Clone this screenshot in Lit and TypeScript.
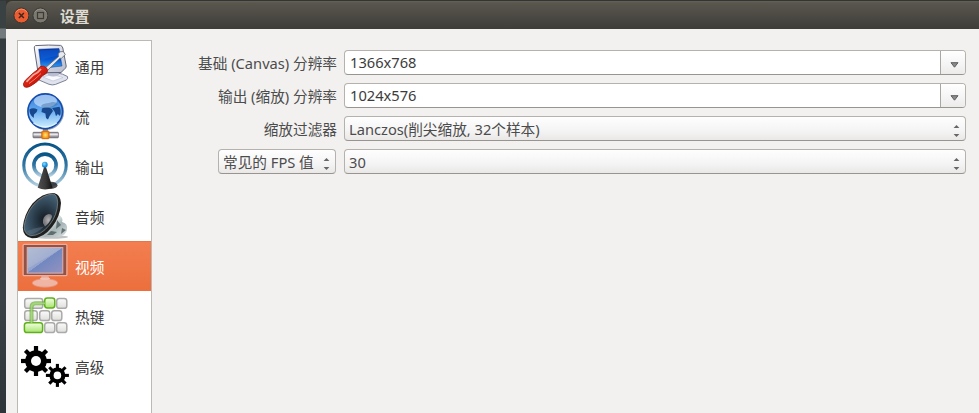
import { LitElement, html, svg, css } from "lit";
import { customElement } from "lit/decorators.js";

const gear = (cx: number, cy: number, outer: number, body: number, hole: number, tooth: number) => svg`
  <g transform="translate(${cx} ${cy})">
    ${[0, 45, 90, 135].map(
      (a) => svg`<rect x=${-tooth / 2} y=${-outer} width=${tooth} height=${outer * 2} transform="rotate(${a})"></rect>`
    )}
    <circle r=${body}></circle>
    <circle r=${hole} fill="#fff"></circle>
  </g>`;

const key = (x: number, y: number, w: number, green = false) => svg`
  <rect x=${x + 0.7} y=${y + 0.7} width=${w - 1.4} height="9.8" rx="2.6"
    fill=${green ? "url(#keyGreen)" : "url(#keyGrey)"} stroke=${green ? "#60b01c" : "#aaaaa8"} stroke-width="1.5"></rect>`;

const icons = {
  general: svg`
    <defs>
      <linearGradient id="scr" x1="0" y1="0" x2="0" y2="1"><stop offset="0" stop-color="#0334a8"/><stop offset=".55" stop-color="#0656d0"/><stop offset="1" stop-color="#35a2f4"/></linearGradient>
      <linearGradient id="red" x1="0" y1="0" x2="1" y2="1"><stop offset="0" stop-color="#f25a40"/><stop offset=".5" stop-color="#d81f10"/><stop offset="1" stop-color="#8c0c06"/></linearGradient>
      <linearGradient id="shell" x1="0" y1="0" x2="1" y2="1"><stop offset="0" stop-color="#fff"/><stop offset="1" stop-color="#b4b9cb"/></linearGradient>
    </defs>
    <path d="M18 34 25 31 Q37 29 46.5 34.5 Q47.5 37 45 38.2 L34.5 42.4 Q31.5 43.5 28 42.3 L18 38Z" fill="#dfe3ee" stroke="#70758a" stroke-width=".9"/>
    <path d="M22 35 31 32.5 42 35.5 32 39Z" fill="#f9faff" stroke="#aeb4c8" stroke-width=".5"/>
    <path d="M27 28 36 28 38 33 Q32 36 27 33Z" fill="#b9bfd0"/>
    <path d="M14.5 3.6 Q28 2.6 39.5 3.4 Q41.4 4 41.8 6 L45.2 24 Q45.4 26 43.6 27 L40 30.5 19 30.7 Q17 30.5 16.7 28.5 L13.3 6 Q13 4.2 14.5 3.6Z" fill="url(#shell)" stroke="#62677c" stroke-width="1"/>
    <path d="M17.7 7.2 38 6.5 41 24 20.3 26.5Z" fill="url(#scr)" stroke="#183c88" stroke-width=".5"/>
    <path d="M18.6 8.5 38 7.2 39.5 14 Q30 13.8 20 19Z" fill="#1767dc" opacity=".4"/>
    <path d="M23.5 26.5 37.5 14.5 Q36.3 11.8 39 9.8 L42.3 9.5 44.3 12.6 40.5 16.2 38.5 16.4 26 29Z" fill="#e6e9ee" stroke="#61656e" stroke-width=".8"/>
    <path d="M19 24.7 Q22.5 23 25.5 25.9 Q27.8 28.5 25.4 31.3 L21.2 34 Q17 40 10 43.8 Q5.5 46.4 3.1 44.6 Q1.2 42 4.4 38.2 L12.5 30.7 Q16.4 28.6 19 24.7Z" fill="url(#red)" stroke="#9c130b" stroke-width=".8"/>
    <path d="M5.5 39.8 12.3 33 Q17.5 30.5 20 27" stroke="#ffc8bd" stroke-width="1.7" fill="none" opacity=".8"/>
    <path d="M8 41.5 14 37 20 31.5" stroke="#ffab98" stroke-width="1" fill="none" opacity=".65"/>`,
  stream: svg`
    <defs>
      <linearGradient id="globe" x1="0" y1="0" x2="0" y2="1"><stop offset="0" stop-color="#3078d2"/><stop offset=".45" stop-color="#5fa6ee"/><stop offset="1" stop-color="#d4f2ff"/></linearGradient>
      <linearGradient id="pipe" x1="0" y1="0" x2="0" y2="1"><stop offset="0" stop-color="#77777c"/><stop offset=".35" stop-color="#f4f4f7"/><stop offset="1" stop-color="#62626a"/></linearGradient>
      <radialGradient id="hub"><stop offset="0" stop-color="#ffe879"/><stop offset="1" stop-color="#f28a0c"/></radialGradient>
    </defs>
    <path d="M22 35h5v5h-5z" fill="#96969d"/>
    <rect x="12" y="40.3" width="25.4" height="5.5" rx=".7" fill="url(#pipe)" stroke="#646268" stroke-width=".7"/>
    <rect x="20.8" y="39.2" width="7.2" height="7.5" rx=".7" fill="url(#hub)" stroke="#d46708"/>
    <circle cx="24.9" cy="19.9" r="18.2" fill="#153a70" opacity=".45"/>
    <circle cx="24.2" cy="19.2" r="17.3" fill="url(#globe)" stroke="#164cad" stroke-width="1.6"/>
    <path d="M8.4 17.5 Q12 14.8 16.5 17.5 L15.7 20 13 22.4 12.7 26 Q8.2 22.5 8.4 17.5ZM21 16.5 Q25 14.5 30.5 16.5 L32 19 28.6 24 27 27.5 25 26 24.4 21.5 20.5 20ZM31 16 38.5 14.8 Q40.7 19.3 39 24 L36.8 22 35 24.2 33.8 20Z" fill="#17488e"/>
    <ellipse cx="24.5" cy="9" rx="11.5" ry="6.3" fill="#dcedff" opacity=".6"/>
    <path d="M20 14.5 Q28 18.5 37 12.5 Q34 8.5 28 11 Q20 11.5 20 14.5Z" fill="#456f9f" opacity=".45"/>
    <path d="M12.5 31 Q24 39 35.7 31" fill="none" stroke="#eafaff" stroke-width="1.4" opacity=".8"/>`,
  output: svg`
    <defs>
      <linearGradient id="wave" x1="0" y1="0" x2="0" y2="1"><stop offset="0" stop-color="#075486"/><stop offset=".5" stop-color="#2f75a2"/><stop offset="1" stop-color="#b7d3e4"/></linearGradient>
      <linearGradient id="mast"><stop offset="0" stop-color="#505050"/><stop offset=".5" stop-color="#3a3a3a"/><stop offset="1" stop-color="#111"/></linearGradient>
      <radialGradient id="ball" cx=".4" cy=".35"><stop offset="0" stop-color="#8fdcff"/><stop offset="1" stop-color="#118bdc"/></radialGradient>
    </defs>
    <circle cx="24" cy="23.2" r="21.2" fill="none" stroke="url(#wave)" stroke-width="3.1"/>
    <circle cx="24" cy="23.2" r="11.1" fill="none" stroke="url(#wave)" stroke-width="3.6"/>
    <ellipse cx="30" cy="43.3" rx="6.5" ry="3.6" fill="#111" opacity=".75"/>
    <path d="M24 22 31.6 45.8 Q24 49.2 16.7 45.8Z" fill="url(#mast)"/>
    <circle cx="23.8" cy="22.7" r="2.9" fill="url(#ball)"/>`,
  audio: svg`
    <defs>
      <radialGradient id="cone" cx=".62" cy=".62" r=".65"><stop offset="0" stop-color="#11191f"/><stop offset=".5" stop-color="#2b3d4b"/><stop offset="1" stop-color="#46647a"/></radialGradient>
      <radialGradient id="cap" cx=".6"><stop offset="0" stop-color="#b5b2b4"/><stop offset="1" stop-color="#77767a"/></radialGradient>
      <linearGradient id="chrome" x1="0" y1="0" x2="1" y2="1"><stop offset="0" stop-color="#66777a"/><stop offset=".35" stop-color="#eef4f4"/><stop offset=".6" stop-color="#a4b3b5"/><stop offset="1" stop-color="#dce3e3"/></linearGradient>
    </defs>
    <ellipse cx="30" cy="45" rx="17" ry="1.7" fill="#777" opacity=".45"/>
    <path d="M37 22 Q43 26 41 30 Q47 31 46 38 Q45 43 38 44.8 L18 45 28 34Z" fill="url(#chrome)"/>
    <path d="M36 28 40 33 35 37ZM41 36 45 38 40 42ZM30 39 36 40 32 43 26 43Z" fill="#3e4b4e" opacity=".7"/>
    <path d="M33 1 Q39.6 2.7 40 11 Q39.4 24.5 31 35 Q22 46.6 11 46.2 Q2 45 1.8 35.5 Q3 22 11.5 11.4 Q22 .5 33 1Z" fill="#20201f"/>
    <path d="M32.6 1.9 Q36.5 3.4 36.7 10.6 Q36.5 23 28.4 33 Q19.8 43.8 9.8 43.7 Q3.2 42 3.1 34.8 Q4.6 22.2 12.7 12.6 Q22 2.3 32.6 1.9Z" fill="url(#cone)" stroke="#999b98" stroke-width=".6"/>
    <path d="M22 31 Q21.2 23.8 27.5 22 Q31.4 22.2 31 25 Q28.5 31.4 24 34.4Z" fill="url(#cap)"/>
    <path d="M6.2 39 Q14 36 23 34.6 Q15 42.5 9 42.4Z" fill="#687785" opacity=".45"/>`,
  video: svg`
    <defs>
      <linearGradient id="panel" x1="0" y1="0" x2="1" y2="1"><stop offset="0" stop-color="#a8b5cf"/><stop offset=".49" stop-color="#94a2cd"/><stop offset=".5" stop-color="#7188c0"/><stop offset="1" stop-color="#9692bf"/></linearGradient>
      <linearGradient id="foot" x1="0" y1="0" x2="0" y2="1"><stop offset="0" stop-color="#f3b6a4"/><stop offset="1" stop-color="#ecb4a5"/></linearGradient>
    </defs>
    <path d="M20.5 34h7l1.6 5H19z" fill="#e9a893"/>
    <ellipse cx="24" cy="41" rx="12.8" ry="4.2" fill="url(#foot)" stroke="#e69179" stroke-width=".8"/>
    <ellipse cx="24" cy="36.8" rx="5" ry="1.3" fill="#f1c2b3"/>
    <rect x="2.1" y="2.3" width="43.8" height="31.4" rx="1.2" fill="#925246" stroke="#f0ad99" stroke-width="1.3"/>
    <rect x="6.2" y="5.6" width="35.6" height="25.5" fill="url(#panel)" stroke="#dfb3b0" stroke-width="1"/>
    <path d="M6.8 6.2H41.2L6.8 26.5Z" fill="#d8dce0" opacity=".22"/>`,
  hotkeys: svg`
    <defs>
      <linearGradient id="keyGrey" x1="0" y1="0" x2="0" y2="1"><stop offset="0" stop-color="#fbfbfb"/><stop offset="1" stop-color="#dededc"/></linearGradient>
      <linearGradient id="keyGreen" x1="0" y1="0" x2="0" y2="1"><stop offset="0" stop-color="#f3ffe6"/><stop offset="1" stop-color="#a6e46b"/></linearGradient>
    </defs>
    ${key(3, 5.8, 19.5)}${key(23, 5.4, 11.5, true)}${key(35, 5.8, 11.5)}
    ${key(3, 18, 14)}${key(18, 18, 11.5)}${key(30, 18, 11.5)}
    ${key(2.7, 30, 19.6, true)}${key(23, 30, 11.5)}${key(35, 30, 11.5)}
    <path d="M10.5 31V15.5Q10.5 11.3 14.5 11.3H24" fill="none" stroke="#62a92b" stroke-width="4" opacity=".65"/>
    <path d="M10.5 31V15.5Q10.5 11.3 14.5 11.3H24" fill="none" stroke="#a8dc80" stroke-width="1.7" opacity=".8"/>`,
  advanced: svg`${gear(15, 19, 15, 10.8, 5, 4.2)}${gear(36.4, 33.4, 11.5, 8, 3.8, 3.1)}`,
};

const pages = [
  { name: "通用", icon: icons.general },
  { name: "流", icon: icons.stream },
  { name: "输出", icon: icons.output },
  { name: "音频", icon: icons.audio },
  { name: "视频", icon: icons.video, selected: true },
  { name: "热键", icon: icons.hotkeys },
  { name: "高级", icon: icons.advanced },
];

const spin = html`<svg class="spin" width="7" height="14" viewBox="0 0 7 14">
  <path d="M.6 4.1 3.5 1 6.4 4.1ZM.6 9.9 3.5 13 6.4 9.9Z" fill="#666"/></svg>`;

@customElement("app-root")
export class AppRoot extends LitElement {
  static styles = css`
    :host { display: block; height: 413px; overflow: hidden; box-sizing: border-box; padding: 1px 0 0 6px;
      background: linear-gradient(#343837 0 1px, #3a4143 1px 28px, #747b7c 29px 38px, #343c3f 39px, #3b4347 300px, #2e3437) 0 0 / 6px 100% no-repeat, #343430;
      font-family: "Noto Sans", "Noto Sans CJK SC", sans-serif; font-size: 14.67px; color: #4c4c4c; }
    .window { height: 412px; display: flex; flex-direction: column; }
    .title { height: 28px; flex: none; box-sizing: border-box; display: flex; align-items: center; padding-left: 7px;
      border-radius: 6px 0 0 0; background: linear-gradient(#65625a 0, #59564e 2px, #3e3d38 100%); color: #dfdbd2; }
    .title span { font-weight: 700; font-size: 14.67px; margin-left: 9px; line-height: 20px; padding-top: 1px; }
    .title svg { margin-right: 3px; }
    .body { flex: 1; display: flex; background: #f2f1f0; padding: 11px 13px 0 11px; }
    .list { width: 133px; flex: none; background: #fff; border: 1px solid #bcb8b2; border-bottom: 0; }
    .item { height: 50px; display: flex; align-items: center; padding-left: 3px; gap: 6px; color: #3c3c3c; }
    .item span { line-height: 22px; padding-top: 1px; }
    .selected { color: #fff; background: linear-gradient(#e1693d 0, #f37e50 1px, #ec6f3d 100%); }
    .form { flex: 1; display: grid; grid-template-columns: 184px 1fr; grid-auto-rows: 25px; gap: 8px; padding-top: 9.5px; box-sizing: border-box; }
    .label { display: flex; justify-content: flex-end; align-items: center; white-space: pre; padding-top: 1px; margin-right: -1px; }
    .holder { padding-top: 0; }
    .field { box-sizing: border-box; height: 25px; border: 1px solid #b5b2ad; border-bottom-color: #989590; border-radius: 4px; display: flex;
      align-items: center; justify-content: space-between; background: linear-gradient(#fefefe, #f5f4f4 60%, #e9e8e7); padding: 0 5px 0 4px; white-space: pre; color: #4c4c4c; }
    .field span { line-height: 22px; padding-top: 1px; }
    .edit span { padding-top: 0; }
    .spin { margin-top: 5px; }
    .edit { background: #fff; padding: 0 0 0 5px; color: #3c3c3c; overflow: hidden; }
    .drop { width: 25px; height: 23px; border-left: 1px solid #aaa7a2; background: linear-gradient(#fff, #f5f4f4 60%, #ecebea); display: flex; align-items: center; justify-content: center; padding: 5px 0 0 2px; box-sizing: border-box; }
    .small { width: 118px; margin-right: 1px; }
  `;

  render() {
    return html`<div class="window">
      <div class="title">
        <svg width="16" height="17" viewBox="0 0 16 17"><circle cx="8.4" cy="8.5" r="7.5" fill="#eb5d31" stroke="#393630"/><path d="M2.8 5.2A6.7 6.7 0 0 1 14 5.2" fill="none" stroke="#ff9974" opacity=".8"/><path d="m5.9 6 5 5m0-5-5 5" stroke="#40251c" stroke-width="1.5"/></svg>
        <svg width="16" height="17" viewBox="0 0 16 17"><circle cx="8.4" cy="8.5" r="7.5" fill="#7c7970" stroke="#3a3833"/><path d="M2.8 5.2A6.7 6.7 0 0 1 14 5.2" fill="none" stroke="#a09d93" opacity=".7"/><rect x="5.5" y="5.5" width="6" height="6" fill="none" stroke="#3c3b36" stroke-width="1.2"/></svg>
        <span>设置</span>
      </div>
      <div class="body">
        <div class="list">${pages.map((p) => html`<div class="item ${p.selected ? "selected" : ""}">
          <svg width="48" height="48" viewBox="0 0 48 48">${p.icon}</svg><span>${p.name}</span></div>`)}</div>
        <div class="form">
          ${[["基础 (Canvas) 分辨率", "1366x768"], ["输出 (缩放) 分辨率", "1024x576"]].map(([l, v]) => html`
            <div class="label">${l}</div>
            <div class="field edit"><span>${v}</span><div class="drop"><svg width="9" height="6" viewBox="0 0 9 6"><path d="M1 .7H8L4.5 5.2Z" fill="#8a8a8a" stroke="#5c5c5c"/></svg></div></div>`)}
          <div class="label">缩放过滤器</div>
          <div class="field"><span>Lanczos(削尖缩放, 32个样本)</span>${spin}</div>
          <div class="label holder"><div class="field small"><span>常见的 FPS 值</span>${spin}</div></div>
          <div class="field"><span>30</span>${spin}</div>
        </div>
      </div>
    </div>`;
  }
}
